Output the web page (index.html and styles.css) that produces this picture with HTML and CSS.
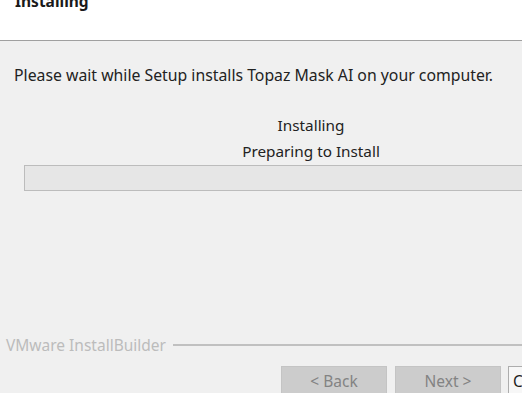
FILE: index.html
```html
<!DOCTYPE html>
<html lang="en">
<head>
    <meta charset="UTF-8">
    <title>Installing</title>
    <link rel="stylesheet" href="styles.css">
</head>
<body>
    <div class="window">
        <div class="header">
            <h2 class="title">Installing</h2>
        </div>
        <div class="content">
            <p class="intro">Please wait while Setup installs Topaz Mask AI on your computer.</p>
            <div class="status">Installing</div>
            <div class="status">Preparing to Install</div>
            <div class="progress"></div>
        </div>
        <div class="brand">
            <span>VMware InstallBuilder</span>
            <div class="rule"></div>
        </div>
        <div class="buttons">
            <button disabled>&lt; Back</button>
            <button disabled>Next &gt;</button>
            <button class="cancel">Cancel</button>
        </div>
    </div>
</body>
</html>
```

FILE: styles.css
```css
body {
    margin: 0;
    background: #f0f0f0;
    font-family: "Noto Sans", "Open Sans", sans-serif;
    overflow: hidden;
}
.window {
    width: 622px;
    display: flex;
    flex-direction: column;
}
.header {
    flex-shrink: 0;
    height: 40px;
    background: #ffffff;
    border-bottom: 1px solid #a0a0a0;
    overflow: hidden;
}
.title {
    margin: -10px 0 0 15px;
    font-size: 15.5px;
    font-weight: 700;
    color: #1a1a1a;
}
.content {
    padding: 0 24px;
}
.intro {
    margin: 24px 0 0 -10px;
    font-size: 15.8px;
    line-height: 20px;
    color: #222222;
}
.status {
    text-align: center;
    font-size: 15.3px;
    color: #222222;
    line-height: 26px;
}
.intro + .status {
    margin-top: 27px;
}
.progress {
    margin-top: 1px;
    height: 24px;
    background: #e6e6e6;
    border: 1px solid #bcbcbc;
}
.brand {
    display: flex;
    align-items: center;
    gap: 7px;
    margin-top: 144px;
    padding-left: 6px;
    font-size: 15.5px;
    line-height: 20px;
    color: #bcbcbc;
}
.rule {
    flex: 1;
    height: 2px;
    background: #c0c0c0;
}
.buttons {
    display: flex;
    gap: 8px;
    margin: 11px 0 0 281px;
}
button {
    flex-shrink: 0;
    width: 106px;
    height: 30px;
    border: 1px solid #c4c4c4;
    background: #cccccc;
    color: #838383;
    font-family: inherit;
    font-size: 15.5px;
    padding: 0;
}
.cancel {
    margin-left: -1px;
    background: #f7f7f7;
    border: 1px solid #adadad;
    color: #1e1e1e;
    text-align: left;
    padding-left: 4px;
}
```
